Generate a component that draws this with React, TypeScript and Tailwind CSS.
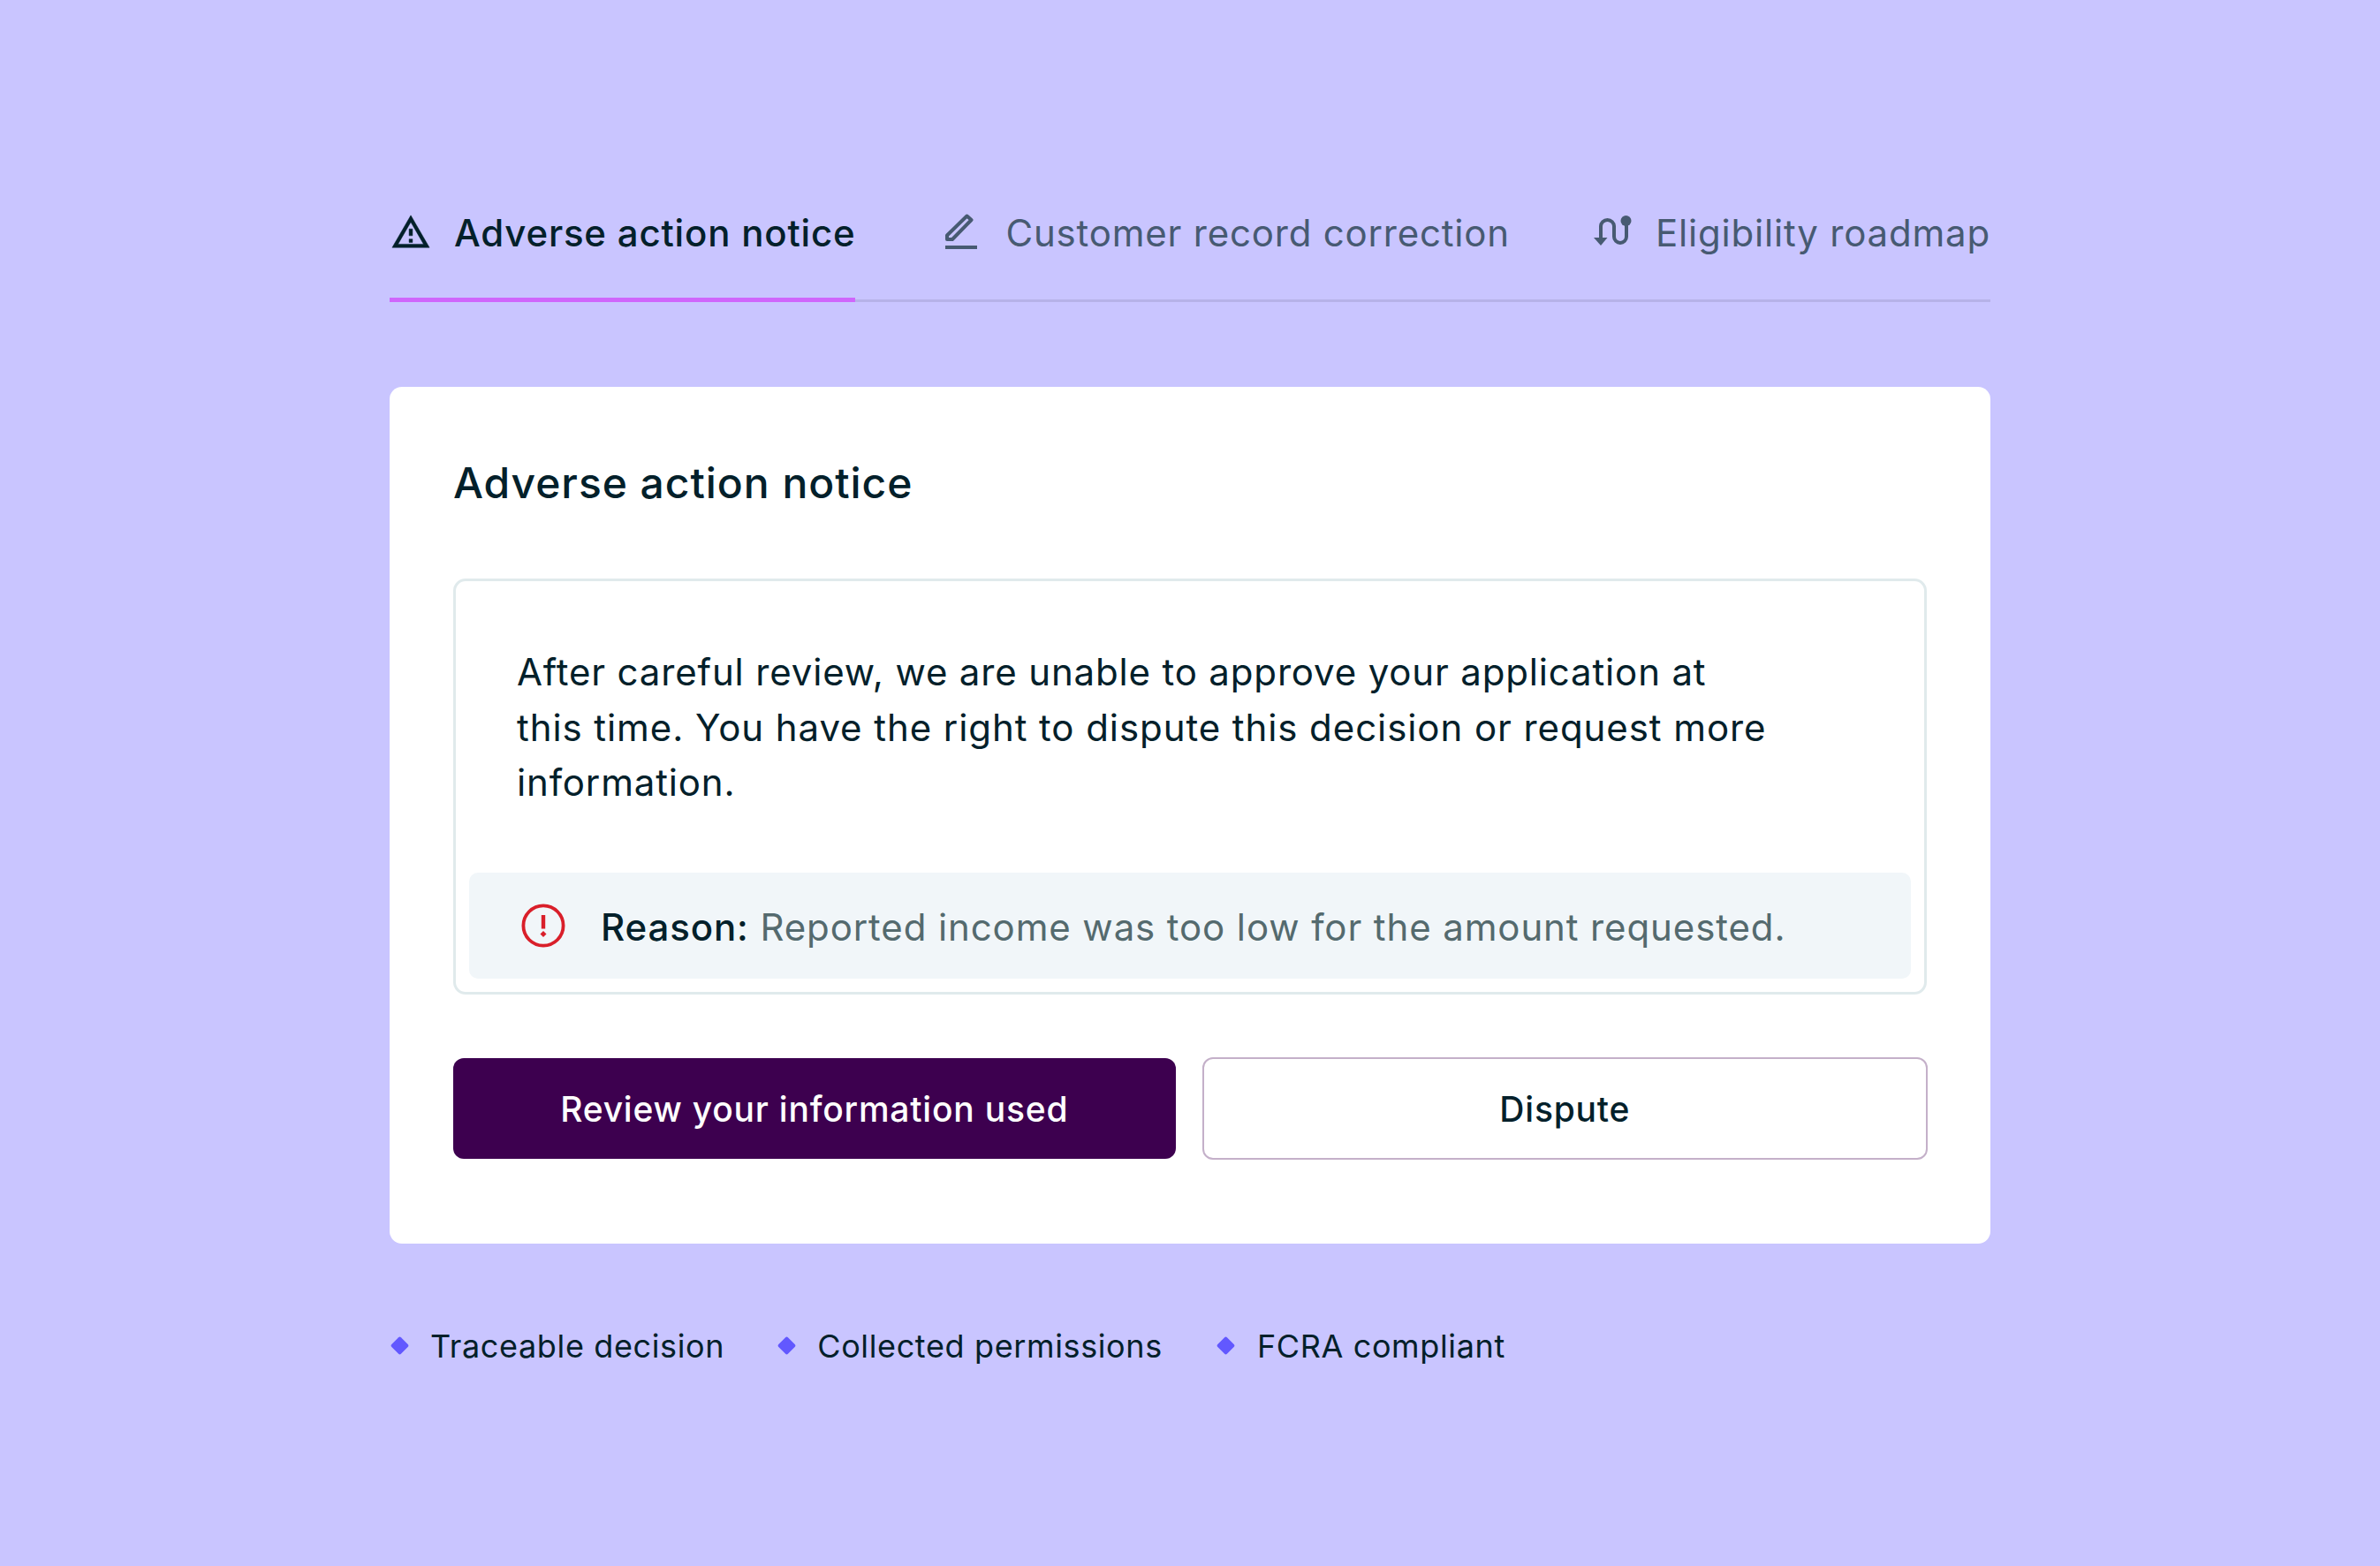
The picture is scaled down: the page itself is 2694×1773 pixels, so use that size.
const font = { fontFamily: '"Inter", "Liberation Sans", sans-serif' };

const WarningIcon = () => (
  <svg viewBox="0 0 24 24" className="mt-[4px] ml-[1px] w-[46px] h-[46px]" fill="#03202a" stroke="#03202a" strokeWidth="0.25">
    <path d="M12 5.99L19.53 19H4.47L12 5.99M12 2L1 21h22L12 2zm1 14h-2v2h2v-2zm0-6h-2v4h2v-4z" />
  </svg>
);

const PencilIcon = () => (
  <svg viewBox="0 0 48 48" className="mt-[4px] w-[48px] h-[48px]" fill="none">
    <path d="M8 31V26.5L30.5 4.5 35.5 9 14 31Z" stroke="#475a72" strokeWidth="4" strokeLinejoin="round" />
    <rect x="6" y="38" width="36" height="4" fill="#475a72" />
  </svg>
);

const RoadmapIcon = () => (
  <svg viewBox="0 0 48 48" className="mt-[4px] w-[48px] h-[48px]" fill="none">
    <path d="M11 30V16.5A7.5 7.5 0 0 1 26 16.5V28A7 7 0 0 0 40 28V10" stroke="#475a72" strokeWidth="4" />
    <path d="M3 29H18.5L11 38Z" fill="#475a72" />
    <circle cx="39.5" cy="10" r="6" fill="#475a72" />
  </svg>
);

const AlertIcon = () => (
  <svg viewBox="0 0 50 50" className="w-[50px] h-[50px]" fill="none">
    <circle cx="25" cy="25" r="22.6" stroke="#d91f2a" strokeWidth="3.8" />
    <rect x="22.8" y="13" width="4.4" height="15.5" fill="#d91f2a" />
    <path d="M25 31L28.5 34.5 25 38 21.5 34.5Z" fill="#d91f2a" />
  </svg>
);

const Diamond = () => (
  <span className="w-[22px] flex justify-center">
    <span className="block w-[15px] h-[15px] rotate-45 rounded-[2px] bg-[#6258ff]" />
  </span>
);

export default function App() {
  return (
    <div style={font} className="min-h-screen bg-[#c9c5ff] px-[441px] pt-[236px] text-[#03202a]">
      {/* Tabs */}
      <div className="flex justify-between border-b-[3px] border-[#b6b2e8] text-[42px] leading-[56px] tracking-[0.8px] whitespace-nowrap">
        <div className="flex gap-[26px] pb-[45px] -mb-[3px] border-b-[5px] border-[#cf66fb] font-medium">
          <WarningIcon />
          <span>Adverse action notice</span>
        </div>
        <div className="ml-[4px] flex gap-[26px] pb-[42px] text-[#475a72]">
          <PencilIcon />
          <span>Customer record correction</span>
        </div>
        <div className="flex gap-[25px] pb-[42px] text-[#475a72]">
          <RoadmapIcon />
          <span>Eligibility roadmap</span>
        </div>
      </div>

      {/* Card */}
      <div className="mt-[96px] rounded-[14px] bg-white px-[72px] pt-[80px] pb-[95px]">
        <h2 className="text-[48px] leading-[58px] font-medium tracking-[0.96px]">Adverse action notice</h2>

        <div className="mt-[79px] rounded-[14px] border-[3px] border-[#e0eaec] p-[15px] pt-[72px]">
          <p className="pl-[54px] max-w-[1486px] text-[42px] leading-[62.6px] tracking-[0.02em]">
            After careful review, we are unable to approve your application at{" "}
            <span className="tracking-[0.92px]">this time. You have the right to dispute this decision or request more</span>{" "}
            information.
          </p>
          <div className="mt-[70px] flex h-[120px] items-center gap-[40px] rounded-[10px] bg-[#f1f6f9] pl-[59px] text-[42px] tracking-[0.88px]">
            <AlertIcon />
            <p className="pt-[3px] whitespace-nowrap text-[#546a6e]">
              <span className="font-medium text-[#03202a]">Reason:</span> Reported income was too low for the amount
              requested.
            </p>
          </div>
        </div>

        <div className="mt-[71px] -mr-[1px] flex items-center gap-[30px] text-[39px] font-medium tracking-[0.02em]">
          <button className="flex-1 h-[114px] pt-[2px] rounded-[12px] bg-[#3d004f] text-white">Review your information used</button>
          <button className="flex-1 h-[116px] pt-[2px] rounded-[12px] border-2 border-[#c4b0c9] bg-white">Dispute</button>
        </div>
      </div>

      {/* Footer points */}
      <div className="mt-[93px] flex items-center gap-[59px] text-[36px] leading-[46px] tracking-[0.63px]">
        <div className="flex items-center gap-[24px]">
          <Diamond />
          <span>Traceable decision</span>
        </div>
        <div className="flex items-center gap-[24px]">
          <Diamond />
          <span>Collected permissions</span>
        </div>
        <div className="ml-[2px] flex items-center gap-[24px]">
          <Diamond />
          <span>FCRA compliant</span>
        </div>
      </div>
    </div>
  );
}
